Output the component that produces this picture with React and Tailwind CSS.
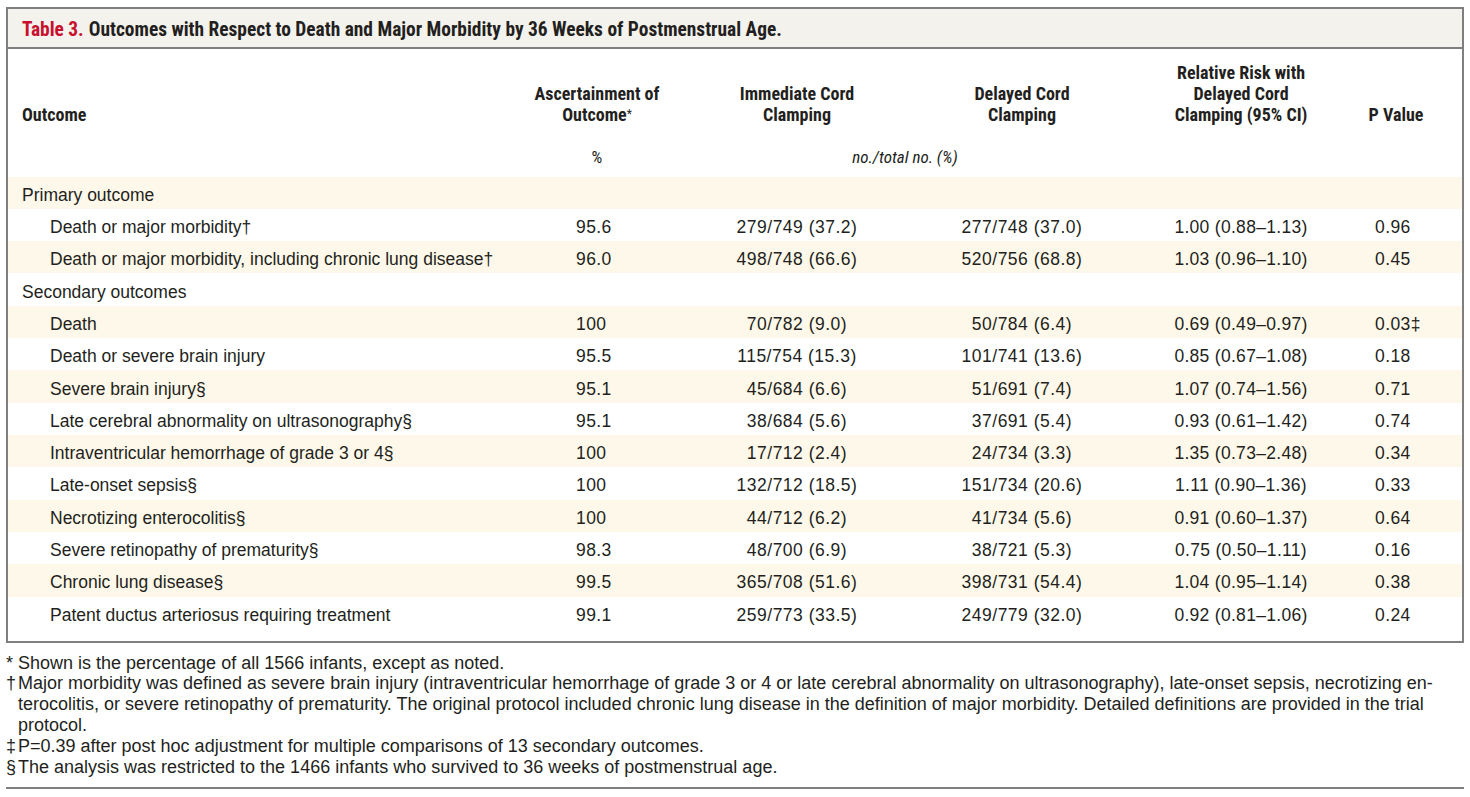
import React from 'react';

const cols = 'grid grid-cols-[484px_210px_190px_260px_178px_132px]';

const rows = [
  { group: 'Primary outcome' },
  { label: 'Death or major morbidity†', asc: '95.6', imm: '279/749 (37.2)', del: '277/748 (37.0)', rr: '1.00 (0.88–1.13)', p: '0.96' },
  { label: 'Death or major morbidity, including chronic lung disease†', asc: '96.0', imm: '498/748 (66.6)', del: '520/756 (68.8)', rr: '1.03 (0.96–1.10)', p: '0.45' },
  { group: 'Secondary outcomes' },
  { label: 'Death', asc: '100', imm: '70/782 (9.0)', del: '50/784 (6.4)', rr: '0.69 (0.49–0.97)', p: '0.03‡' },
  { label: 'Death or severe brain injury', asc: '95.5', imm: '115/754 (15.3)', del: '101/741 (13.6)', rr: '0.85 (0.67–1.08)', p: '0.18' },
  { label: 'Severe brain injury§', asc: '95.1', imm: '45/684 (6.6)', del: '51/691 (7.4)', rr: '1.07 (0.74–1.56)', p: '0.71' },
  { label: 'Late cerebral abnormality on ultrasonography§', asc: '95.1', imm: '38/684 (5.6)', del: '37/691 (5.4)', rr: '0.93 (0.61–1.42)', p: '0.74' },
  { label: 'Intraventricular hemorrhage of grade 3 or 4§', asc: '100', imm: '17/712 (2.4)', del: '24/734 (3.3)', rr: '1.35 (0.73–2.48)', p: '0.34' },
  { label: 'Late-onset sepsis§', asc: '100', imm: '132/712 (18.5)', del: '151/734 (20.6)', rr: '1.11 (0.90–1.36)', p: '0.33' },
  { label: 'Necrotizing enterocolitis§', asc: '100', imm: '44/712 (6.2)', del: '41/734 (5.6)', rr: '0.91 (0.60–1.37)', p: '0.64' },
  { label: 'Severe retinopathy of prematurity§', asc: '98.3', imm: '48/700 (6.9)', del: '38/721 (5.3)', rr: '0.75 (0.50–1.11)', p: '0.16' },
  { label: 'Chronic lung disease§', asc: '99.5', imm: '365/708 (51.6)', del: '398/731 (54.4)', rr: '1.04 (0.95–1.14)', p: '0.38' },
  { label: 'Patent ductus arteriosus requiring treatment', asc: '99.1', imm: '259/773 (33.5)', del: '249/779 (32.0)', rr: '0.92 (0.81–1.06)', p: '0.24' },
];

const notes = [
  { sym: '*', lines: ['Shown is the percentage of all 1566 infants, except as noted.'] },
  {
    sym: '†',
    lines: [
      'Major morbidity was defined as severe brain injury (intraventricular hemorrhage of grade 3 or 4 or late cerebral abnormality on ultrasonography), late-onset sepsis, necrotizing en-',
      'terocolitis, or severe retinopathy of prematurity. The original protocol included chronic lung disease in the definition of major morbidity. Detailed definitions are provided in the trial',
      'protocol.',
    ],
  },
  { sym: '‡', lines: ['P=0.39 after post hoc adjustment for multiple comparisons of 13 secondary outcomes.'] },
  { sym: '§', lines: ['The analysis was restricted to the 1466 infants who survived to 36 weeks of postmenstrual age.'] },
];

// condensed face for title and column heads, if one is installed
const narrow =
  "font-['Roboto_Condensed','Open_Sans_Condensed','DejaVu_Sans_Condensed','Liberation_Sans_Narrow',Roboto,sans-serif] [font-stretch:condensed]";

export default function App() {
  return (
    <div className="bg-white min-h-screen pl-[6px] pt-[7px] text-[#231f20] font-['Liberation_Sans',Arial,sans-serif]">
      <div className="w-[1458px] border-2 border-[#7f7f7f]">
        {/* title band */}
        <div className={`h-[40px] bg-[#f4f2ed] border-b-2 border-[#7f7f7f] flex items-center pt-[4px] pl-[14px] text-[19.4px] font-bold ${narrow}`}>
          <span className="text-[#c8102e] mr-[5px]">Table 3.</span>
          <span>Outcomes with Respect to Death and Major Morbidity by 36 Weeks of Postmenstrual Age.</span>
        </div>

        {/* column heads */}
        <div className={`${cols} items-end pt-[13px] text-[18px] leading-[21px] font-bold ${narrow}`}>
          <div className="pl-[14px]">Outcome</div>
          <div className="text-center">
            Ascertainment of
            <br />
            Outcome<span className="text-[12px] align-top font-normal">*</span>
          </div>
          <div className="text-center">
            Immediate Cord
            <br />
            Clamping
          </div>
          <div className="text-center">
            Delayed Cord
            <br />
            Clamping
          </div>
          <div className="text-center">
            Relative Risk with
            <br />
            Delayed Cord
            <br />
            Clamping (95% CI)
          </div>
          <div className="text-center">P Value</div>
        </div>
        <div className={`${cols} mt-[22px] text-[17px] leading-[21px] italic ${narrow}`}>
          <div />
          <div className="text-center not-italic">%</div>
          <div className="col-span-2 text-center pr-[44px]">no./total no. (%)</div>
        </div>

        {/* body rows */}
        <div className="mt-[8.5px] pb-[11.5px] text-[17.5px]">
          {rows.map((r, i) => (
            <div key={i} className={`${cols} h-[32.33px] pt-[4px] items-center whitespace-nowrap ${i % 2 === 0 ? 'bg-[#fdf8e9]' : 'bg-white'}`}>
              {r.group ? (
                <div className="pl-[14px]">{r.group}</div>
              ) : (
                <>
                  <div className="pl-[42px]">{r.label}</div>
                  <div className="pl-[84px] tracking-[0.4px]">{r.asc}</div>
                  <div className="text-center tracking-[0.5px]">{r.imm}</div>
                  <div className="text-center tracking-[0.5px]">{r.del}</div>
                  <div className="text-center tracking-[0.3px]">{r.rr}</div>
                  <div className="pl-[45px] tracking-[0.4px]">{r.p}</div>
                </>
              )}
            </div>
          ))}
        </div>
      </div>

      {/* footnotes */}
      <div className="mt-[10px] text-[18px] leading-[20.8px] whitespace-nowrap">
        {notes.map((n) => (
          <div key={n.sym} className="flex">
            <div className="w-[12px] shrink-0">{n.sym}</div>
            <div>
              {n.lines.map((l, j) => (
                <div key={j}>{l}</div>
              ))}
            </div>
          </div>
        ))}
      </div>
      <div className="mt-[9.5px] h-[2px] w-[1458px] bg-[#7f7f7f]" />
    </div>
  );
}
